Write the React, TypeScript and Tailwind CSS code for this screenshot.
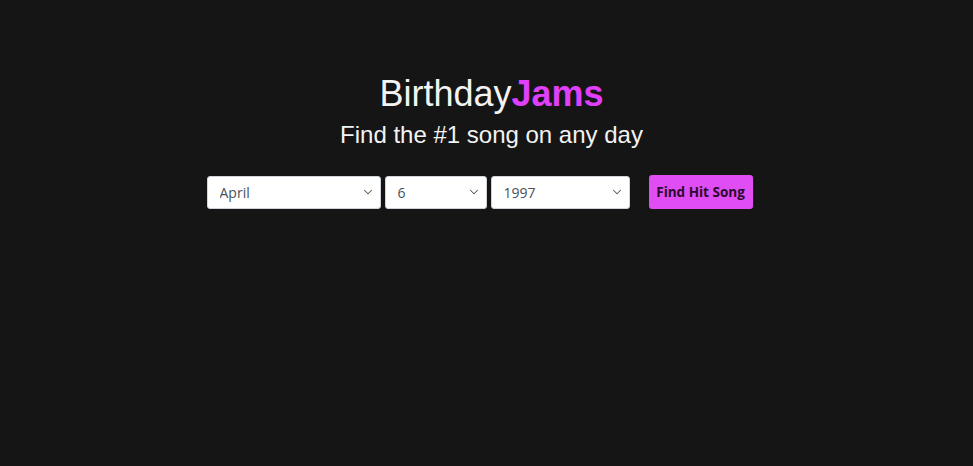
import React, { useState } from 'react';
import { ChevronDown } from 'lucide-react';

const months = [
  'January', 'February', 'March', 'April', 'May', 'June',
  'July', 'August', 'September', 'October', 'November', 'December',
];
const days = Array.from({ length: 31 }, (_, i) => String(i + 1));
const years = Array.from({ length: 60 }, (_, i) => String(2019 - i));

const Picker: React.FC<{
  value: string;
  options: string[];
  onChange: (v: string) => void;
  width: string;
}> = ({ value, options, onChange, width }) => (
  <div className={`relative ${width}`}>
    <select
      value={value}
      onChange={(e) => onChange(e.target.value)}
      className="h-[33px] w-full appearance-none rounded-[3px] border border-[#ced4da] bg-white pl-[12px] pr-6 text-[14px] text-[#495057] outline-none font-['Open_Sans',sans-serif]"
    >
      {options.map((o) => (
        <option key={o} value={o}>
          {o}
        </option>
      ))}
    </select>
    <ChevronDown
      className="pointer-events-none absolute right-[6px] top-1/2 -translate-y-1/2 text-[#555]"
      size={14}
      strokeWidth={1.8}
    />
  </div>
);

export default function App() {
  const [month, setMonth] = useState('April');
  const [day, setDay] = useState('6');
  const [year, setYear] = useState('1997');

  return (
    <div className="min-h-[466px] bg-[#151515] pt-[72px] font-['Liberation_Sans',Arial,sans-serif]">
      <h1 className="ml-[10px] text-center text-[36px] leading-[44px] text-[#f3f3f3]">
        Birthday<span className="font-bold text-[#e040fb]">Jams</span>
      </h1>
      <p className="ml-[10px] mt-[5px] text-center text-[24px] leading-[28px] text-[#f3f3f3]">
        Find the #1 song on any day
      </p>
      <div className="mt-[26px] flex items-center justify-center pr-[14px]">
        <Picker value={month} options={months} onChange={setMonth} width="w-[174px]" />
        <div className="w-[4px]" />
        <Picker value={day} options={days} onChange={setDay} width="w-[102px]" />
        <div className="w-[4px]" />
        <Picker value={year} options={years} onChange={setYear} width="w-[139px]" />
        <button className="ml-[19px] h-[34px] w-[104px] rounded-[3px] bg-[#e04ef3] text-[13.5px] font-bold text-[#2a0a2e] font-['Open_Sans',sans-serif]">
          Find Hit Song
        </button>
      </div>
    </div>
  );
}
